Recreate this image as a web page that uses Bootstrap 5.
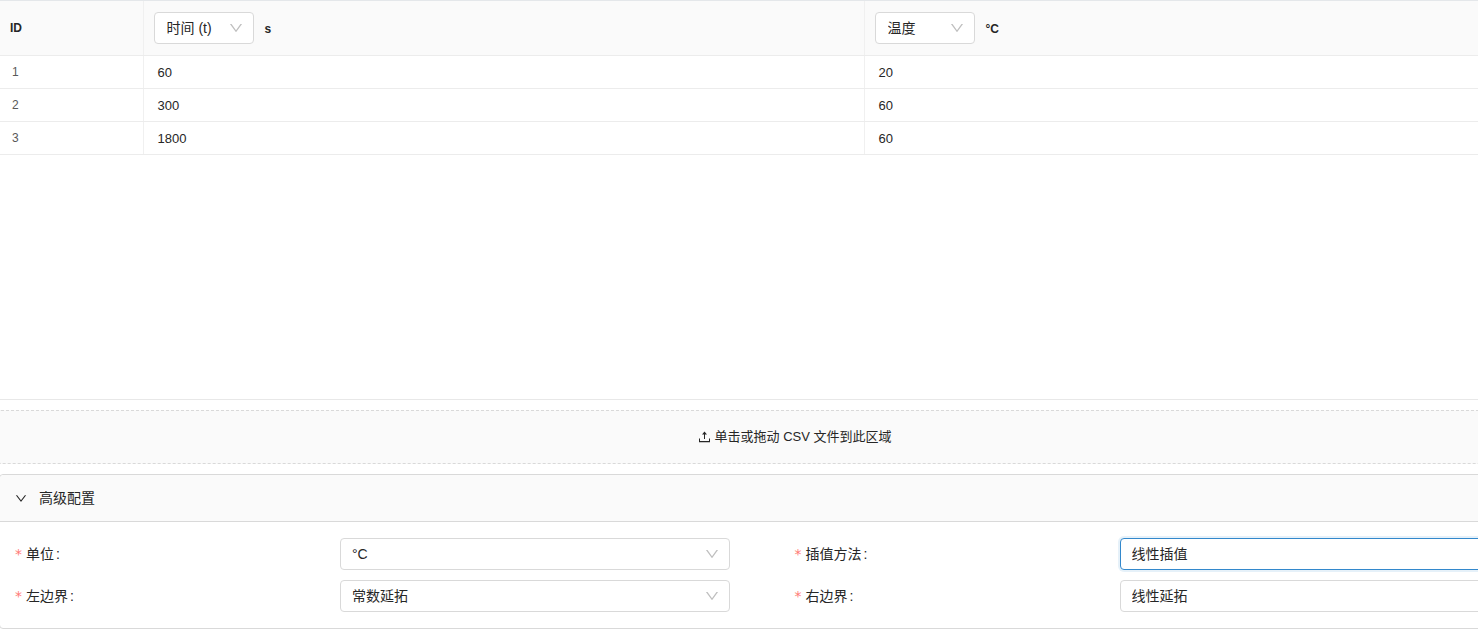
<!DOCTYPE html>
<html lang="zh-CN">
<head>
<meta charset="utf-8">
<meta name="viewport" content="width=device-width, initial-scale=1">
<title>高级配置</title>
<link href="https://cdn.jsdelivr.net/npm/bootstrap@5.3.0/dist/css/bootstrap.min.css" rel="stylesheet">
<style>
  body {
    font-family: "Liberation Sans", "Noto Sans CJK SC", sans-serif;
    font-size: 14px;
    line-height: 22px;
    color: #262626;
  }
  /* the editor is wider than its viewport and is clipped at the right */
  .sheet { width: calc(100vw + 113px); margin-left: -1px; }
  .grid-box { height: 400px; border-top: 1px solid #e4e7ea; border-bottom: 1px solid #e8e8e8; }
  .grid-table { table-layout: fixed; font-size: 13px; line-height: 20px; color: #262626; }
  .grid-table th, .grid-table td { border-bottom: 1px solid #ececec; border-right: 1px solid #f0f0f0; vertical-align: middle; }
  .grid-table th:last-child, .grid-table td:last-child { border-right: 0; }
  .grid-table thead th { height: 54px; padding: 0 10px; background: #fafafa; font-size: 12px; }
  .grid-table thead th:first-child { padding-left: 11px; }
  .grid-table tbody td, .grid-table tbody th { height: 33px; padding: 2px 14px 0; }
  .grid-table tbody th { font-size: 12px; font-weight: 400; color: #595959; padding: 0 13px; }
  .col-id { width: 144px; }
  .col-time { width: 721px; }
  .col-unit { margin-left: 11px; padding-top: 2px; }
  .pick {
    height: 32px; padding: 0 30px 0 11px; font-size: 14px; line-height: 30px; color: #262626;
    border: 1px solid #d9d9d9; border-radius: 4px;
    background-color: #fff; background-position: right 9px center; background-size: 16px 16px;
    background-image: url("data:image/svg+xml,%3Csvg xmlns='http://www.w3.org/2000/svg' viewBox='0 0 1024 1024' fill='%23bfbfbf'%3E%3Cpath d='M884 256h-75c-5.1 0-9.9 2.5-12.9 6.6L512 654.2 227.9 262.6c-3-4.1-7.8-6.6-12.9-6.6h-75c-6.5 0-10.3 7.4-6.5 12.7l352.6 486.1c12.8 17.6 39 17.6 51.7 0l352.6-486.1c3.9-5.3.1-12.7-6.4-12.7z'/%3E%3C/svg%3E");
  }
  .pick-short { width: 100px; padding-left: 12px; }
  .pick-active, .pick:focus { border-color: #3388cc; box-shadow: 0 0 0 2px rgba(51, 136, 204, .12); }
  .drop-zone { height: 54px; margin-top: 10px; font-size: 13px; color: #262626; background: #fafafa; border: 1px dashed #d9d9d9; border-radius: 2px; }
  .config { margin-top: 10px; border: 1px solid #d9d9d9; border-radius: 4px; }
  .config-head { height: 47px; padding: 0 14px; gap: 11px; color: #262626; background: #fafafa; border: 0; border-bottom: 1px solid #d9d9d9; border-radius: 4px 4px 0 0; }
  .config-body { padding: 16px 15px; row-gap: 10px; }
  .field-label { flex: 0 0 325px; }
  .field-label::before { content: "*"; display: inline-block; margin-right: 4px; font-family: "DejaVu Sans", sans-serif; line-height: 1; color: #ff7875; }
  .field-label::after { content: ":"; margin-left: 2px; }
</style>
</head>
<body>
<div class="overflow-hidden">
<main class="sheet">
  <div class="grid-box">
    <table class="grid-table w-100">
      <colgroup><col class="col-id"><col class="col-time"><col></colgroup>
      <thead>
        <tr>
          <th scope="col">ID</th>
          <th scope="col">
            <div class="d-flex align-items-center">
              <select class="form-select pick pick-short" aria-label="第一列"><option>时间 (t)</option></select>
              <span class="col-unit">s</span>
            </div>
          </th>
          <th scope="col">
            <div class="d-flex align-items-center">
              <select class="form-select pick pick-short" aria-label="第二列"><option>温度</option></select>
              <span class="col-unit">°C</span>
            </div>
          </th>
        </tr>
      </thead>
      <tbody>
        <tr><th scope="row">1</th><td>60</td><td>20</td></tr>
        <tr><th scope="row">2</th><td>300</td><td>60</td></tr>
        <tr><th scope="row">3</th><td>1800</td><td>60</td></tr>
      </tbody>
    </table>
  </div>

  <button type="button" class="drop-zone w-100 d-flex align-items-center justify-content-center gap-1">
    <svg width="13" height="14" viewBox="0 0 13 14" fill="currentColor" aria-hidden="true"><path d="M6 4.500H4L6.500 1.500 9 4.500H7V9H6zM1 8.500h1V11h9V8.500h1V12.300H1z"/></svg>
    <span>单击或拖动 CSV 文件到此区域</span>
  </button>

  <section class="config">
    <button type="button" class="config-head w-100 d-flex align-items-center" data-bs-toggle="collapse" data-bs-target="#advanced" aria-expanded="true" aria-controls="advanced">
      <svg width="14" height="14" viewBox="0 0 1024 1024" fill="currentColor" aria-hidden="true"><path transform="rotate(90 512 512)" d="M765.7 486.8L314.9 134.7A7.97 7.97 0 00302 141v77.3c0 4.9 2.3 9.6 6.1 12.6l360 281.1-360 281.1c-3.9 3-6.1 7.7-6.1 12.6V883c0 6.7 7.7 10.4 12.9 6.3l450.8-352.1a31.96 31.96 0 000-50.4z"/></svg>
      <span>高级配置</span>
    </button>
    <div id="advanced" class="collapse show">
      <form class="config-body row gx-0">
        <div class="col-6 d-flex align-items-center">
          <label class="field-label" for="unit">单位</label>
          <select class="form-select pick w-50" id="unit"><option>°C</option></select>
        </div>
        <div class="col-6 d-flex align-items-center">
          <label class="field-label" for="method">插值方法</label>
          <select class="form-select pick pick-active w-50" id="method"><option>线性插值</option></select>
        </div>
        <div class="col-6 d-flex align-items-center">
          <label class="field-label" for="left-edge">左边界</label>
          <select class="form-select pick w-50" id="left-edge"><option>常数延拓</option></select>
        </div>
        <div class="col-6 d-flex align-items-center">
          <label class="field-label" for="right-edge">右边界</label>
          <select class="form-select pick w-50" id="right-edge"><option>线性延拓</option></select>
        </div>
      </form>
    </div>
  </section>
</main>
</div>
<script src="https://cdn.jsdelivr.net/npm/bootstrap@5.3.0/dist/js/bootstrap.bundle.min.js"></script>
</body>
</html>
